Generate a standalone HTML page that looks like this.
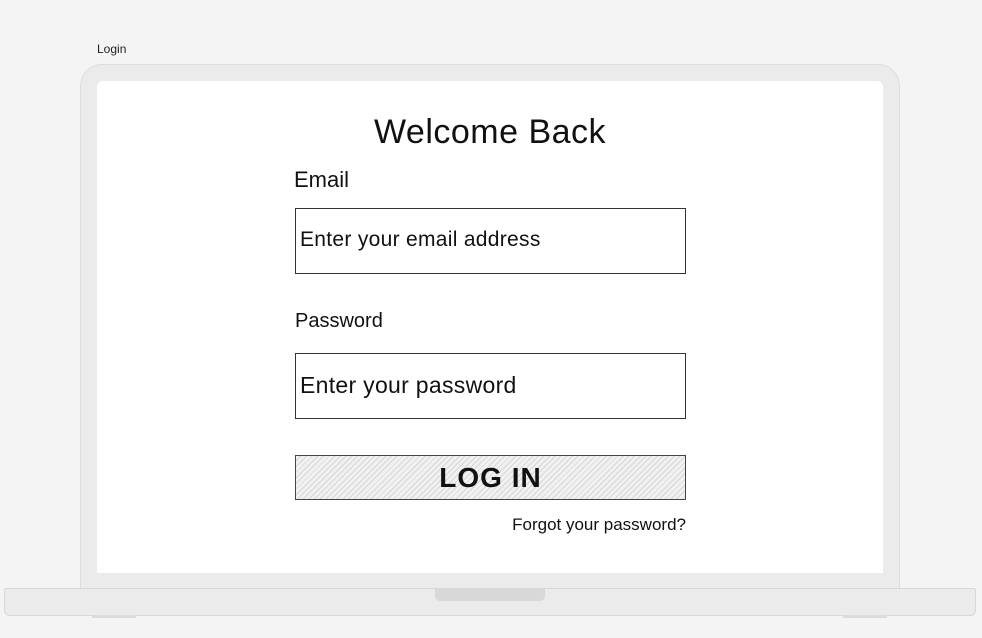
<!DOCTYPE html>
<html><head><meta charset="utf-8"><style>
*{margin:0;padding:0;box-sizing:border-box}
body{width:982px;height:638px;background:#f4f4f4;position:relative;overflow:hidden;font-family:"Liberation Sans",sans-serif;color:#111}
.a{position:absolute}
.bezel{left:80px;top:64px;width:820px;height:530px;background:#ebebeb;border:1px solid #dcdcdc;border-radius:22px 22px 0 0}
.screen{left:97px;top:81px;width:786px;height:492px;background:#fff;border-radius:6px 6px 0 0}
.base{left:4px;top:588px;width:972px;height:28px;background:#ebebeb;border:1px solid #d8d8d8;border-radius:2px 2px 6px 6px}
.notch{left:435px;top:589px;width:110px;height:12px;background:#d8d8d8;border-radius:0 0 5px 5px}
.foot{top:615px;width:44px;height:3px;background:#dcdcdc}
.box{left:295px;width:391px;border:1px solid #333;background:#fff}
.ph{font-size:21px;font-weight:300;padding-left:4px;letter-spacing:0.3px}
.btn{background:repeating-linear-gradient(135deg,#f1f1f1 0 3px,#d6d6d6 3px 4px);border:1px solid #444}
</style></head><body>
<div class="a" style="left:97px;top:42px;font-size:12px;color:#222">Login</div>
<div class="a bezel"></div>
<div class="a screen"></div>
<div class="a base"></div>
<div class="a notch"></div>
<div class="a foot" style="left:92px"></div>
<div class="a foot" style="left:843px"></div>
<div class="a" style="left:97px;width:786px;top:113px;text-align:center;font-size:34px;letter-spacing:0.5px">Welcome Back</div>
<div class="a" style="left:294px;top:167px;font-size:22px">Email</div>
<div class="a box ph" style="top:208px;height:66px;line-height:62px">Enter your email address</div>
<div class="a" style="left:295px;top:310px;font-size:20px">Password</div>
<div class="a box ph" style="top:353px;height:66px;line-height:62px;font-size:23px">Enter your password</div>
<div class="a box btn" style="top:455px;height:45px;text-align:center;line-height:44px;font-size:28px;font-weight:bold;letter-spacing:1px">LOG IN</div>
<div class="a" style="left:486px;width:200px;top:515px;text-align:right;font-size:17px">Forgot your password?</div>
</body></html>
